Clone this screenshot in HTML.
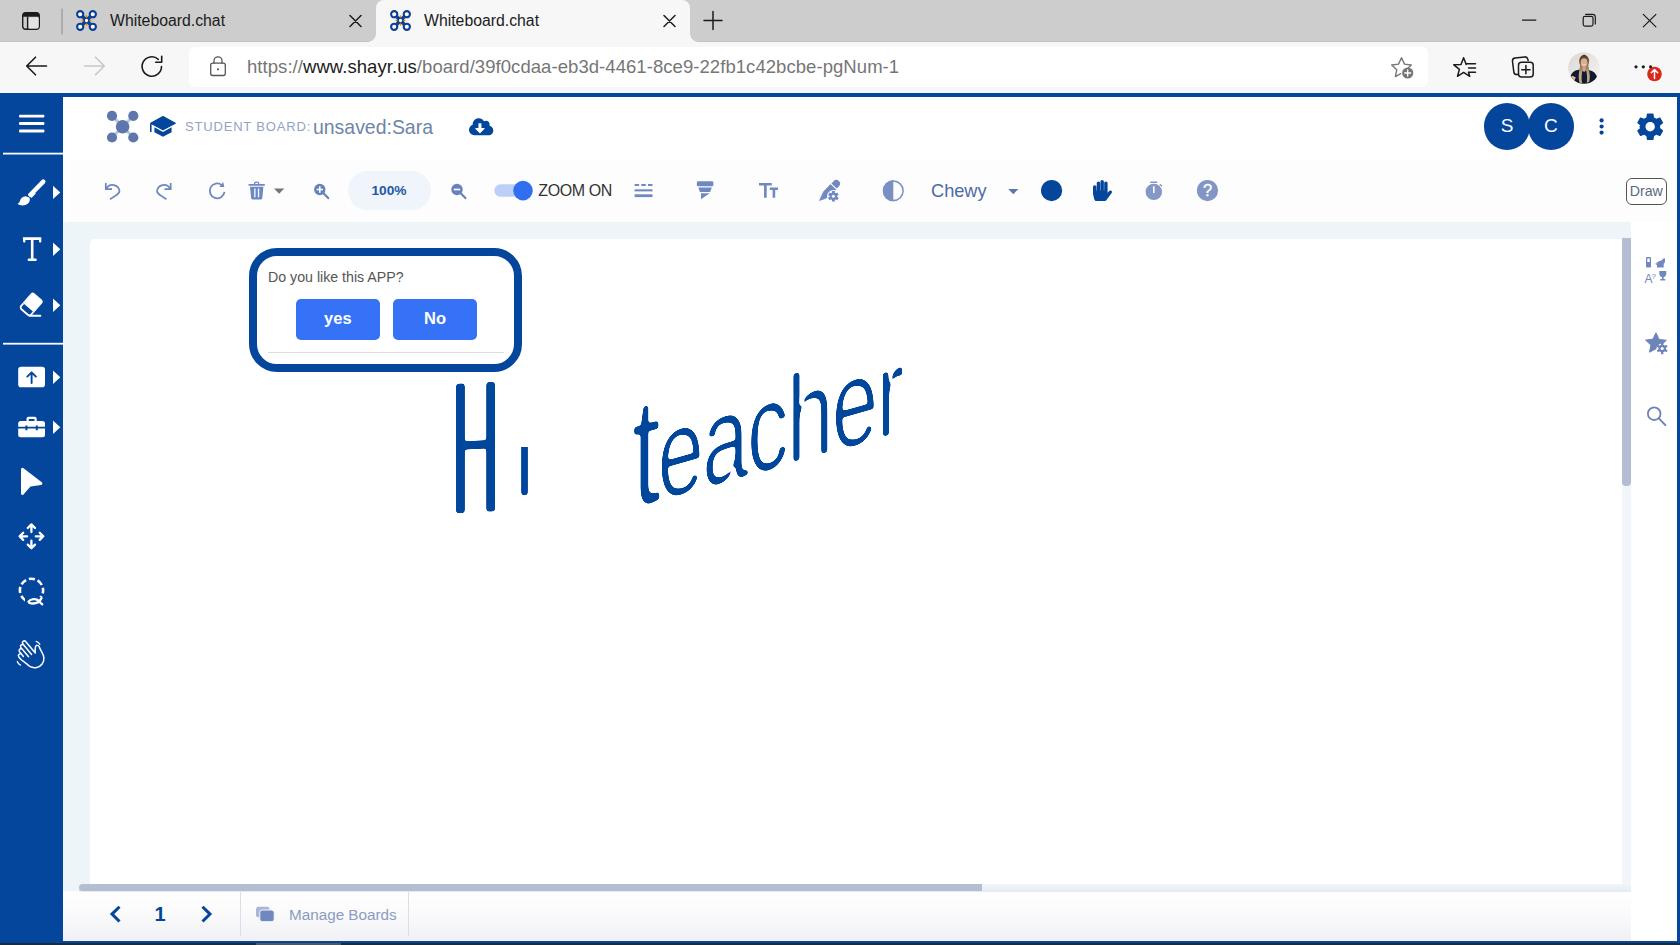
<!DOCTYPE html>
<html lang="en">
<head>
<meta charset="utf-8">
<title>Whiteboard.chat</title>
<style>
*{box-sizing:border-box;margin:0;padding:0}
html,body{width:1680px;height:945px;overflow:hidden;background:#fff}
body{position:relative;font-family:"Liberation Sans",sans-serif;color:#222}
.abs{position:absolute}
svg{position:absolute;overflow:visible}
/* ---------- browser chrome ---------- */
#tabbar{left:0;top:0;width:1680px;height:42px;background:#cccdcc;border-bottom:1px solid #c2c3c2}
#tab2{left:376px;top:0;width:314px;height:42px;background:#f7f7f7;border-radius:8px 8px 0 0}
#tab2:before,#tab2:after{content:"";position:absolute;bottom:0;width:8px;height:8px}
#tab2:before{left:-8px;background:radial-gradient(circle at 0 0,rgba(247,247,247,0) 7.5px,#f7f7f7 8px)}
#tab2:after{right:-8px;background:radial-gradient(circle at 100% 0,rgba(247,247,247,0) 7.5px,#f7f7f7 8px)}
.tabtitle{top:11.3px;font-size:15.8px;color:#1b1b1b;white-space:nowrap;line-height:20px}
#navbar{left:0;top:42px;width:1680px;height:51px;background:#f7f7f7}
#addr{left:189px;top:47px;width:1239px;height:40px;background:#fff;border-radius:6px}
#url{left:247px;top:55px;font-size:18.5px;letter-spacing:.06px;line-height:24px;color:#767676;white-space:nowrap}
#url b{font-weight:normal;color:#1b1b1b}
/* ---------- app frame ---------- */
#frame{left:0;top:93px;width:1680px;height:850px;background:#04469b}
#bottomdark{left:0;top:942.5px;width:1680px;height:2.5px;background:#1a2b3c}
#main{left:63px;top:97px;width:1614px;height:844px;background:#fff}
#workbg{left:63px;top:222px;width:1568px;height:670px;background:#eef5f9}
#canvas{left:89.5px;top:238.5px;width:1541.5px;height:647.5px;background:#fff;border-radius:5px 0 0 0}

/* ---------- app header ---------- */
#tbstrip{left:70px;top:160px;width:1607px;height:62px;background:#fdfdfe}
.lato{font-family:"Liberation Sans",sans-serif}
#sb{left:185px;top:119px;font-size:13px;letter-spacing:.82px;color:#93a3c5;line-height:16px;white-space:nowrap}
#bn{left:313px;top:115px;font-size:19.45px;color:#6d85a8;line-height:24px;white-space:nowrap}
.av{width:46.6px;height:46.6px;border-radius:50%;background:#04469b;color:#fff;font-size:19px;line-height:46.6px;text-align:center;top:103px}
#pill{left:347.5px;top:171px;width:83px;height:39px;border-radius:20px;background:#eff5fb}
#pct{left:347.5px;top:171px;width:83px;text-align:center;font-weight:bold;font-size:13.7px;line-height:39px;color:#1f58a4}
#zoomon{left:538.3px;top:181px;font-size:16px;letter-spacing:-.4px;line-height:20px;color:#333;white-space:nowrap}
#chewy{left:931px;top:179px;font-size:18.2px;line-height:24px;color:#4d6aa6;white-space:nowrap}
#drawbtn{left:1625.8px;top:177.5px;width:41px;height:27.5px;border:1px solid #555;border-radius:6px;font-size:14.2px;line-height:25px;text-align:center;color:#5d6880;background:#fff}

/* ---------- canvas content ---------- */
#dlg{left:249.3px;top:248.4px;width:273.2px;height:123.2px;border:8px solid #04469b;border-radius:28px;background:#fff}
#dlgq{left:268px;top:268px;font-size:14.2px;line-height:18px;color:#555;white-space:nowrap}
.qb{top:299.3px;width:84px;height:40.7px;border-radius:5px;background:#3572f5;color:#fff;font-weight:bold;font-size:16.5px;line-height:39px;text-align:center}
#dlgline{left:267.7px;top:352px;width:236.3px;height:1px;background:#ddd}
.hw{color:#04469b;white-space:nowrap;line-height:1;transform-origin:0 0}
#hwHi{left:452px;top:349px;font-size:116px;transform:skewY(-3deg) scale(.37,1.130)}
#hwHi::first-letter{font-size:176px;letter-spacing:56px;vertical-align:-13px}
#hwT{left:632px;top:378px;font-size:100px;letter-spacing:-2px;transform:skewY(-15.7deg) scale(.835,1.240)}
#hwT::first-letter{font-size:124px;letter-spacing:-4px}

/* ---------- scrollbars / right rail / bottom bar ---------- */
#vtrack{left:1622px;top:238px;width:9px;height:648px;background:#f2f6fa}
#vthumb{left:1622px;top:238px;width:8.5px;height:248px;background:#b4bed2;border-radius:0 0 4px 4px}
#htrack{left:79px;top:884px;width:1552px;height:7.5px;background:linear-gradient(#f2f6fa,#e3eaf1)}
#hthumb{left:79px;top:884px;width:903px;height:7px;background:#b4bed2;border-radius:4px 0 0 4px}
#bbar{left:63px;top:891px;width:1568px;height:50px;background:linear-gradient(#ffffff 0,#fbfbfc 40%,#f1f1f5 100%)}
.bdiv{top:892px;width:1px;height:44px;background:#d9deea}
#pgnum{left:150px;top:902px;width:20px;text-align:center;font-weight:bold;font-size:20px;line-height:24px;color:#04469b}
#mb{left:289px;top:905px;font-size:15.250px;line-height:20px;color:#8a9cc1;white-space:nowrap}
</style>
</head>
<body>
<!-- browser chrome -->
<div id="tabbar" class="abs"></div>
<div id="tab2" class="abs"></div>
<div class="abs tabtitle" style="left:110px">Whiteboard.chat</div>
<div class="abs tabtitle" style="left:424px">Whiteboard.chat</div>
<div id="navbar" class="abs"></div>
<div id="addr" class="abs"></div>
<div id="url" class="abs">https://<b>www.shayr.us</b>/board/39f0cdaa-eb3d-4461-8ce9-22fb1c42bcbe-pgNum-1</div>

<!-- chrome icons -->
<svg style="left:0;top:0" width="1680" height="93" viewBox="0 0 1680 93" fill="none" stroke="#1b1b1b" stroke-width="1.4" stroke-linecap="round" stroke-linejoin="round">
  <!-- tab actions -->
  <rect x="22.7" y="12.7" width="16.6" height="16.6" rx="3.2"/>
  <path d="M22.7 16.8v-1a3.2 3.2 0 0 1 3.2-3.2h10.2a3.2 3.2 0 0 1 3.2 3.2v1z" fill="#1b1b1b" stroke="none"/><rect x="28.3" y="17.5" width="10.3" height="11.1" rx="1.5" fill="#e4e4e4" stroke="none"/>
  <path d="M27.6 17v12"/>
  <path d="M62 9v25" stroke="#8c8c8c" stroke-width="1"/>
  <!-- close x / plus -->
  <path d="M350 15.5l11 11M361 15.5l-11 11M664 15.5l11 11M675 15.5l-11 11" stroke-width="1.5"/>
  <path d="M704 20.5h18M713 11.5v18" stroke-width="1.5"/>
  <!-- window controls -->
  <path d="M1522.5 20.2h13.3" stroke-width="1.2"/>
  <rect x="1583.2" y="16.3" width="9.8" height="9.8" rx="1.8" stroke-width="1.2"/>
  <path d="M1585.6 14.3h6.9a2.8 2.8 0 0 1 2.8 2.8v6.9" stroke-width="1.2"/>
  <path d="M1643.3 14.3l12.6 12.6M1655.9 14.3l-12.6 12.6" stroke-width="1.2"/>
  <!-- back / fwd / reload -->
  <path d="M46.5 66H27M35.5 57.2L26.7 66l8.8 8.8" stroke-width="1.6"/>
  <path d="M84.5 66H104M95.5 57.2l8.8 8.8-8.8 8.8" stroke="#c8c8c8" stroke-width="1.6"/>
  <path d="M161.5 66.5a9.7 9.7 0 1 1-3.2-7.2M161.7 56.3v6h-6" stroke-width="1.6"/>
  <!-- lock -->
  <rect x="210.7" y="63.2" width="14.6" height="12.3" rx="2" stroke="#555" stroke-width="1.3"/>
  <path d="M214 63v-2.2a4 4 0 0 1 8 0V63" stroke="#555" stroke-width="1.3"/>
  <circle cx="218" cy="69.3" r="1.1" fill="#555" stroke="none"/>
  <!-- star plus -->
  <path d="M1401.5 57.8l3 6.3 6.8 0.9-5 4.7 0.6 3M1401.5 57.8l-3 6.3-6.8 0.9 5 4.8-1.3 6.8 5.3-2.9" stroke="#767676" stroke-width="1.4"/>
  <circle cx="1407.7" cy="73" r="5.6" fill="#767676" stroke="none"/>
  <path d="M1404.7 73h6M1407.7 70v6" stroke="#fff" stroke-width="1.3"/>
  <!-- favorites -->
  <path d="M1466.2 64.4 L1463.6 57.7 L1461.0 64.4 L1453.8 64.8 L1459.4 69.4 L1457.5 76.3 L1463.6 72.4 L1469.7 76.3 L1468.6 72.5" stroke-width="1.5"/>
  <path d="M1466.5 63.7h9M1468.5 68h7M1468.5 72.3h7" stroke-width="1.5"/>
  <!-- collections -->
  <path d="M1518 74.5h-1.2a3 3 0 0 1-3-2.7l-1.3-10.5a3 3 0 0 1 2.6-3.3l9.5-1.1a3 3 0 0 1 3.2 2.2l0.3 1.3" stroke-width="1.5"/>
  <rect x="1518.5" y="62.3" width="14.7" height="14.7" rx="3" stroke-width="1.5"/>
  <path d="M1521.8 69.650h8.2M1525.9 65.5v8.3" stroke-width="1.5"/>
  <!-- ellipsis -->
  <g fill="#1b1b1b" stroke="none"><circle cx="1636" cy="66.8" r="1.6"/><circle cx="1643.3" cy="66.8" r="1.6"/><circle cx="1650.6" cy="66.8" r="1.6"/></g>
  <circle cx="1654.5" cy="74" r="7.3" fill="#d9271a" stroke="none"/>
  <path d="M1654.5 78.5v-8.5M1651.3 72.8l3.2-3.2 3.2 3.2" stroke="#fff" stroke-width="1.5"/>
</svg>
<!-- favicons -->
<svg style="left:76px;top:10px" width="21" height="21" viewBox="0 0 21 21"><g fill="#fff" stroke="#0a3f94" stroke-width="2.1">
  <circle cx="4.2" cy="4.2" r="3.1"/><circle cx="16.8" cy="4.2" r="3.1"/><circle cx="4.2" cy="16.8" r="3.1"/><circle cx="16.8" cy="16.8" r="3.1"/>
  <path d="M6.8 6.8l7.4 7.4M14.2 6.8l-7.4 7.4" stroke-width="3.4"/>
  <circle cx="10.5" cy="10.5" r="2.5" stroke-width="1.7"/>
  <g fill="#f08a00" stroke="none"><circle cx="10.5" cy="6.4" r="1.050"/><circle cx="10.5" cy="14.6" r="1.050"/><circle cx="6.4" cy="10.5" r="1.050"/><circle cx="14.6" cy="10.5" r="1.050"/></g>
</g></svg>
<svg style="left:390px;top:10px" width="21" height="21" viewBox="0 0 21 21"><g fill="#fff" stroke="#0a3f94" stroke-width="2.1">
  <circle cx="4.2" cy="4.2" r="3.1"/><circle cx="16.8" cy="4.2" r="3.1"/><circle cx="4.2" cy="16.8" r="3.1"/><circle cx="16.8" cy="16.8" r="3.1"/>
  <path d="M6.8 6.8l7.4 7.4M14.2 6.8l-7.4 7.4" stroke-width="3.4"/>
  <circle cx="10.5" cy="10.5" r="2.5" stroke-width="1.7"/>
  <g fill="#f08a00" stroke="none"><circle cx="10.5" cy="6.4" r="1.050"/><circle cx="10.5" cy="14.6" r="1.050"/><circle cx="6.4" cy="10.5" r="1.050"/><circle cx="14.6" cy="10.5" r="1.050"/></g>
</g></svg>

<!-- profile photo -->
<svg style="left:1567.6px;top:51.6px" width="32" height="32" viewBox="0 0 32 32">
  <defs><clipPath id="pc"><circle cx="16" cy="16" r="15.8"/></clipPath>
  <linearGradient id="pbg" x1="0" y1="0" x2="1" y2="1"><stop offset="0" stop-color="#d9d8d3"/><stop offset=".55" stop-color="#e9e8e5"/><stop offset="1" stop-color="#f6f5f3"/></linearGradient>
  <linearGradient id="hair2" x1="0" y1="0" x2="0" y2="1"><stop offset="0" stop-color="#4a3828"/><stop offset="1" stop-color="#9a7f5c"/></linearGradient><linearGradient id="hair" x1="0" y1="0" x2="0" y2="1"><stop offset="0" stop-color="#4a3828"/><stop offset=".35" stop-color="#8a6f4e"/><stop offset=".7" stop-color="#c4ab82"/><stop offset="1" stop-color="#bfa77c"/></linearGradient></defs>
  <g clip-path="url(#pc)">
    <rect width="32" height="32" fill="url(#pbg)"/>
    <path d="M2.5 24.5c1-3.5 3.5-6 8-6.7l5.5-0.8 5.5 1.3c4.5 1 6.5 3.5 7.5 6.7l-3 4.5c-3 2.5-7 3.7-10 3.7s-8-1.7-11-5z" fill="#101832"/>
    <path d="M2 25.5l2.5-1.7 3.3 1.6-1.5 3.4z" fill="#e0b79b"/>
    <path d="M11.3 30.5c-1.2-6.5-0.3-11.5 0.7-16.5 0.5-4.5 0.8-7.5 1.8-9.5 0.7-1.3 1.6-1.8 2.3-1.8 1 0 1.9 0.5 2.5 1.8 1 2 1.2 5 1.8 9.5 0.8 5 2 10 1 15.5l-2.6 1.5c0.7-5.5 0.2-9.5-0.8-12.5h-3.4c-1 3-1.4 7.5-0.5 13z" fill="url(#hair)"/>
    <ellipse cx="16.1" cy="9.3" rx="5" ry="6.4" fill="url(#hair2)"/><ellipse cx="16.1" cy="10.7" rx="3.3" ry="4.4" fill="#dcad8f"/>
    <path d="M14.6 14h3v4.5l-1.5 1.7-1.5-1.7z" fill="#d3a184"/>
    <path d="M14.7 12.3c0.9 0.8 2 0.8 2.9 0" stroke="#fff" stroke-width="0.7" fill="none"/>
  </g>
</svg>
<!-- app -->
<div id="frame" class="abs"></div>
<div id="bottomdark" class="abs"></div><div class="abs" style="left:256px;top:942.5px;width:85px;height:2.5px;background:#4d5760"></div>
<div id="main" class="abs"></div>
<div id="workbg" class="abs"></div>
<div id="canvas" class="abs"></div>


<!-- header -->
<div id="tbstrip" class="abs"></div>
<svg style="left:63px;top:97px" width="1614" height="125" viewBox="63 97 1614 125" fill="none">
  <!-- logo -->
  <g stroke="#b9c4de" stroke-width="3.2"><path d="M112 115.8l21.3 21.7M133.3 115.8L112 137.5"/></g>
  <g fill="#5d76ab"><circle cx="112" cy="115.8" r="5.1"/><circle cx="133.3" cy="115.8" r="5.1"/><circle cx="112" cy="137.5" r="5.1"/><circle cx="133.3" cy="137.5" r="5.1"/><circle cx="122.6" cy="126.7" r="6.8"/></g>
  <!-- grad cap -->
  <g fill="#04469b">
    <path d="M163 116.6l12.3 6.6-12.3 6.6-12.3-6.6z" stroke="#04469b" stroke-width="1.2" stroke-linejoin="round"/>
    <path d="M154.4 127.3v5l8.6 4.4 8.6-4.4v-5l-8.6 4.6z"/>
    <path d="M150.8 124v7.5" stroke="#04469b" stroke-width="1.6" stroke-linecap="round"/>
  </g>
  <!-- cloud download -->
  <g transform="translate(469 117.1) scale(0.038)"><path fill="#04469b" d="M537.6 226.6c4.1-10.7 6.4-22.4 6.4-34.6 0-53-43-96-96-96-19.7 0-38.1 6-53.3 16.2C367 64.2 315.3 32 256 32c-88.4 0-160 71.6-160 160 0 2.7.1 5.4.2 8.1C40.2 219.8 0 273.2 0 336c0 79.5 64.5 144 144 144h368c70.7 0 128-57.3 128-128 0-61.9-44-113.6-102.4-125.4zm-132.9 88.7L299.3 420.7c-6.2 6.2-16.4 6.2-22.6 0L171.3 315.3c-10.1-10.1-2.9-27.3 11.3-27.3H248V176c0-8.8 7.2-16 16-16h48c8.8 0 16 7.2 16 16v112h65.4c14.2 0 21.4 17.2 11.3 27.3z"/></g>
  <!-- more / gear -->
  <g fill="#04469b"><circle cx="1601.6" cy="120.4" r="2.1"/><circle cx="1601.6" cy="126.5" r="2.1"/><circle cx="1601.6" cy="132.6" r="2.1"/></g>
  <g transform="translate(1634.2 110.750) scale(1.333)" fill="#04469b"><path d="M19.430 12.980c.04-.32.070-.64.070-.98s-.03-.66-.07-.98l2.110-1.650c.19-.15.240-.42.120-.64l-2-3.460c-.12-.22-.39-.3-.61-.22l-2.490 1c-.52-.4-1.080-.73-1.690-.98l-.38-2.650C14.460 2.180 14.250 2 14 2h-4c-.25 0-.46.180-.49.420l-.38 2.650c-.61.250-1.170.59-1.690.98l-2.490-1c-.23-.09-.49 0-.61.220l-2 3.460c-.13.220-.07.490.12.640l2.110 1.650c-.4.320-.7.650-.7.980s.3.660.7.980l-2.110 1.650c-.19.150-.24.420-.12.640l2 3.460c.12.220.39.3.61.220l2.490-1c.52.4 1.080.73 1.690.98l.38 2.650c.3.240.24.420.49.420h4c.25 0 .46-.18.490-.42l.38-2.650c.61-.25 1.170-.59 1.690-.98l2.490 1c.23.090.49 0 .61-.22l2-3.460c.12-.22.070-.49-.12-.64l-2.110-1.650zM12 15.5c-1.930 0-3.5-1.570-3.5-3.5s1.570-3.5 3.5-3.5 3.5 1.570 3.5 3.5-1.570 3.5-3.5 3.5z"/></g>
  <!-- ===== toolbar icons ===== -->
  <g stroke="#6f87bd" stroke-width="1.7" stroke-linecap="square" stroke-linejoin="miter">
    <!-- undo -->
    <path d="M105.8 183v6.2h6.2M106.5 188.5a7 7 0 0 1 13 2.6c0 2.1-1.5 3.5-9.5 8.2" stroke-linecap="butt"/>
    <!-- redo -->
    <path d="M170.7 183v6.2h-6.2M170 188.5a7 7 0 0 0-13 2.6c0 2.1 1.5 3.5 9.5 8.2" stroke-linecap="butt"/>
    <!-- refresh -->
    <path d="M224.5 191.9A7.4 7.4 0 1 1 221.8 185.1" stroke-linecap="butt" stroke-width="1.8"/>
    <path d="M224.3 187.0L223.2 182.0L219.3 186.9z" fill="#6f87bd" stroke="none"/>
  </g>
  <!-- trash -->
  <g fill="#6d88c4">
    <path d="M254 184v-0.6a2 2 0 0 1 2-2h1.4a2 2 0 0 1 2 2v0.6h-1.3v-0.4a0.9 0.9 0 0 0-0.9-0.9h-1a0.9 0.9 0 0 0-0.9 0.9v0.4z"/>
    <rect x="248.4" y="184" width="16.6" height="1.7" rx="0.8"/>
    <path d="M250 186.8h13.4l-1.1 11.1a1.9 1.9 0 0 1-1.9 1.7h-7.4a1.9 1.9 0 0 1-1.9-1.7zM254.2 188.6v8.6h1.3v-8.6zM257.9 188.6v8.6h1.3v-8.6z" fill-rule="evenodd"/>
  </g>
  <path d="M274 188.4h10.3l-5.150 5.4z" fill="#757575"/>
  <!-- zoom in -->
  <circle cx="319.8" cy="189.5" r="5.7" fill="#6682bd"/>
  <path d="M323.5 193.2l4.7 4.9" stroke="#6682bd" stroke-width="2.2" stroke-linecap="round"/>
  <path d="M316.6 189.5h6.4M319.8 186.3v6.4" stroke="#fff" stroke-width="1.6"/>
  <!-- zoom out -->
  <circle cx="457" cy="189.5" r="5.7" fill="#6682bd"/>
  <path d="M460.7 193.2l4.7 4.9" stroke="#6682bd" stroke-width="2.2" stroke-linecap="round"/>
  <path d="M453.8 189.5h6.4" stroke="#fff" stroke-width="1.6"/>
  <!-- toggle -->
  <rect x="494.3" y="184.3" width="34" height="12.5" rx="6.250" fill="#bccff8"/>
  <circle cx="523" cy="190.6" r="9.8" fill="#2f6ff0"/>
  <!-- line style -->
  <g fill="#7189c1"><rect x="634.6" y="184" width="4.5" height="2"/><rect x="641.3" y="184" width="4.5" height="2"/><rect x="648" y="184" width="4.5" height="2"/><rect x="634.6" y="189.3" width="17.9" height="2.1"/><rect x="634.6" y="194.3" width="17.9" height="2.8"/></g>
  <!-- brush-stroke icon -->
  <g fill="#7189c1"><path d="M698.2 181.3h13.8a1.4 1.4 0 0 1 1.4 1.4v2.2a1.4 1.4 0 0 1-1.4 1.4h-13.8a1.4 1.4 0 0 1-1.4-1.4v-2.2a1.4 1.4 0 0 1 1.4-1.4z"/><path d="M698.3 187.6h13.5l-1.6 4.4h-10.3z"/><path d="M701 193.3h8.7l-8.7 6z"/></g>
  <!-- Tt -->
  <path d="M759 183h12.8v2.6h-5.1v12.1h-2.7v-12.1h-5zM769.8 187.4h8.2v2.5h-2.8v7.8h-2.6v-7.8h-2.8z" fill="#7189c1"/>
  <!-- pen gear -->
  <g fill="#7189c1">
    <path d="M831.4 183.5 L833.6 181.2 A3.7 3.7 0 0 1 839.0 186.3 L836.8 188.6 Z"/>
    <path d="M830.5 184.5 L835.8 189.6 L830.7 195.0 Q826.3 199.0 819.6 200.4 L823.6 191.7 Z" stroke="#7189c1" stroke-width="0.8" stroke-linejoin="round"/>
  </g>
  <circle cx="833.4" cy="196.3" r="6.3" fill="#fdfdfe"/>
  <g fill="#7189c1"><circle cx="833.4" cy="196.3" r="3.7"/>
    <path d="M833.4 191v10.6M828.8 193.650l9.2 5.3M828.8 198.950l9.2-5.3" stroke="#7189c1" stroke-width="2.9"/>
  </g>
  <circle cx="833.4" cy="196.3" r="1.5" fill="#fff"/>
  <!-- contrast -->
  <circle cx="893.3" cy="190.8" r="9.8" stroke="#7a90c4" stroke-width="1.5"/>
  <path d="M893.3 180.3a10.5 10.5 0 0 0 0 21z" fill="#7a90c4"/>
  <!-- caret -->
  <path d="M1008.3 189h10l-5 5.2z" fill="#5c77ad"/>
  <!-- colour dot -->
  <circle cx="1051.6" cy="190.6" r="10.6" fill="#04469b"/>
  <!-- hand (FA hand-paper) -->
  <g transform="translate(1112 179.9) scale(-0.0424 0.0413)" fill="#04469b"><path d="M408.781 128.007C386.356 127.578 368 146.360 368 168.790V256h-8V79.790c0-22.430-18.356-41.212-40.781-40.783C297.488 39.423 280 57.169 280 79v177h-8V40.790C272 18.360 253.644-.422 231.219.007 209.488.423 192 18.169 192 40v216h-8V80.790c0-22.430-18.356-41.212-40.781-40.783C121.488 40.423 104 58.169 104 80v235.992l-31.648-43.519c-12.993-17.866-38.009-21.817-55.877-8.823-17.865 12.994-21.815 38.010-8.822 55.877l125.601 172.705A48 48 0 0 0 172.073 512h197.590c22.274 0 41.622-15.324 46.724-37.006l26.508-112.660a192.011 192.011 0 0 0 5.104-43.975V168c.001-21.831-17.487-39.577-39.218-39.993z"/></g>
  <!-- stopwatch -->
  <g fill="#8597c4"><circle cx="1153.8" cy="191.9" r="8.2"/><rect x="1150.2" y="181.5" width="7.2" height="1.6" rx="0.5"/><path d="M1159.8 184.2l2.2 2" stroke="#8597c4" stroke-width="1.5"/></g>
  <path d="M1153.8 186.8v5.6" stroke="#fff" stroke-width="1.6" stroke-linecap="round"/>
  <!-- help -->
  <circle cx="1207.5" cy="190.6" r="10.6" fill="#8295c4"/>
</svg>
<div id="sb" class="abs lato">STUDENT BOARD:</div>
<div id="bn" class="abs lato">unsaved:Sara</div>
<div class="abs av" style="left:1527.7px">C</div>
<div class="abs av" style="left:1483.7px">S</div>
<div id="pill" class="abs"></div>
<div id="pct" class="abs">100%</div>
<div id="zoomon" class="abs">ZOOM ON</div>
<div id="chewy" class="abs">Chewy</div>
<div class="abs" style="left:1197px;top:180px;width:21px;text-align:center;font-size:16.5px;line-height:21px;color:#fff;-webkit-text-stroke:.35px #fff">?</div>
<div id="drawbtn" class="abs">Draw</div>

<!-- canvas content -->
<div id="dlg" class="abs"></div>
<div id="dlgq" class="abs">Do you like this APP?</div>
<div class="abs qb" style="left:295.8px">yes</div>
<div class="abs qb" style="left:393px">No</div>
<div id="dlgline" class="abs"></div>
<svg width="0" height="0"><defs>
  <filter id="hwf1" x="-20%" y="-20%" width="140%" height="140%"><feMorphology operator="erode" radius="0 4.2"/><feMorphology operator="dilate" radius="0.8 0"/><feGaussianBlur stdDeviation="1.4"/><feComponentTransfer><feFuncA type="linear" slope="7" intercept="-2.4"/></feComponentTransfer></filter>
  <filter id="hwf2" x="-20%" y="-60%" width="140%" height="220%"><feMorphology operator="erode" radius="0.5 1.1"/><feGaussianBlur stdDeviation="1.4"/><feComponentTransfer><feFuncA type="linear" slope="7" intercept="-2.4"/></feComponentTransfer></filter>
</defs></svg>
<div class="abs" style="left:0;top:0;width:1680px;height:945px;filter:url(#hwf1);clip-path:polygon(0 0,510px 0,510px 447px,1680px 447px,1680px 945px,0 945px)"><div id="hwHi" class="abs hw">Hi</div></div>
<div class="abs" style="left:0;top:0;width:1680px;height:945px;filter:url(#hwf2)"><div id="hwT" class="abs hw">teacher</div></div>

<!-- scrollbars, right rail, bottom bar -->
<div id="vtrack" class="abs"></div><div id="vthumb" class="abs"></div>
<div id="bbar" class="abs"></div>
<div id="htrack" class="abs"></div><div id="hthumb" class="abs"></div>
<div class="abs bdiv" style="left:240px"></div><div class="abs bdiv" style="left:408px"></div>
<svg style="left:63px;top:230px" width="1614" height="711" viewBox="63 230 1614 711" fill="none">
  <!-- right rail: 4-in-1 icon -->
  <g fill="#7088bf">
    <rect x="1646" y="257" width="5" height="10.5" rx="1"/>
    <path d="M1657 267.5v-3.5c0-1.5 1-2.5 2.5-3l3-1v-2l1.2 1 1.3-1v3.5c0 1-0.5 1.7-1.3 2v4z"/>
    <path d="M1659.3 271h7v2.5c0 2-1.3 3.5-2.7 3.8v1.7h1.7v1.5h-5v-1.5h1.7v-1.7c-1.4-0.3-2.7-1.8-2.7-3.8z"/>
  </g>
  <path d="M1657.5 262.5c-1.5 0-1.8 1.8-0.7 2.5" stroke="#7088bf" stroke-width="1"/>
  <rect x="1647.3" y="258.5" width="2.4" height="3.5" fill="#fff"/>
  <!-- star gear -->
  <path d="M1656 332.8l3.1 6.6 7.2 0.9-3.3 3.1c-3.4-0.6-6.6 1.8-6.9 5.3l-6.6 3.5 1.4-7.1-5.3-5 7.2-0.9z" fill="#6d84b8" stroke="#6d84b8" stroke-width="1" stroke-linejoin="round"/>
  <g stroke="#6d84b8" stroke-width="2.3"><path d="M1662.2 342.8v11.4M1657.3 345.650l9.8 5.7M1657.3 351.350l9.8-5.7"/></g>
  <circle cx="1662.2" cy="348.5" r="3.7" fill="#6d84b8"/><circle cx="1662.2" cy="348.5" r="1.5" fill="#fff"/>
  <!-- search -->
  <circle cx="1654.2" cy="413.7" r="6.3" stroke="#6d84b8" stroke-width="1.8"/>
  <path d="M1658.8 418.4l6.6 6.7" stroke="#6d84b8" stroke-width="2" stroke-linecap="round"/>
  <!-- pager -->
  <path d="M119.5 906.7l-7.5 7.4 7.5 7.4M202.5 906.7l7.5 7.4-7.5 7.4" stroke="#04469b" stroke-width="3" stroke-linejoin="miter"/>
  <!-- boards icon -->
  <rect x="256" y="906.7" width="13.5" height="10.5" rx="2.5" fill="#a9b6d6"/>
  <rect x="259.8" y="910" width="14.4" height="11.7" rx="2.5" fill="#7088bf" stroke="#f8f8fa" stroke-width="1"/>
</svg>
<div class="abs" style="left:1644.5px;top:269.5px;font-size:12px;line-height:13px;color:#7088bf;letter-spacing:-1px;white-space:nowrap">A<span style="font-size:8px;vertical-align:4px">?</span></div>
<div id="pgnum" class="abs">1</div>
<div id="mb" class="abs lato">Manage Boards</div>
<!-- sidebar -->
<svg style="left:0;top:93px" width="63" height="600" viewBox="0 93 63 600" fill="#fff" stroke="none">
  <!-- hamburger -->
  <rect x="19" y="114.7" width="25.4" height="2.8" rx="1"/><rect x="19" y="122.1" width="25.4" height="2.8" rx="1"/><rect x="19" y="129.6" width="25.4" height="2.8" rx="1"/>
  <rect x="3" y="152.7" width="60" height="1.8"/>
  <rect x="3" y="342.8" width="60" height="1.8"/>
  <!-- fly-out arrows -->
  <path d="M53 185.7l7.3 6.7-7.3 6.7zM53 242.5l7.3 6.7-7.3 6.7zM53 298.5l7.3 6.7-7.3 6.7zM53 370.5l7.3 6.7-7.3 6.7zM53 420.5l7.3 6.7-7.3 6.7z"/>
  <!-- brush -->
  <path d="M43.3 181.6L30.4 194.8" fill="none" stroke="#fff" stroke-width="4.4" stroke-linecap="round"/>
  <path d="M32.8 190.5l3 3-4.3 4.5-3.6-3.4z"/>
  <path d="M25.6 196.3c-3.2 0.2-4.9 2.1-5.5 4.3-0.4 1.5-1.2 2.7-2.6 3.4 2.4 1.7 7.6 2.2 10.5-0.5 1.9-1.8 2.4-4.2 1.3-6.1z"/>
  <!-- T -->
  <path d="M22.9 237.2h18.4v4.4a0.9 0.9 0 0 1-0.9 0.9h-0.5a0.9 0.9 0 0 1-0.9-0.9v-1.7h-5.5v18.5h2.3a0.9 0.9 0 0 1 0.9 0.9v0.8a0.9 0.9 0 0 1-0.9 0.9h-7.2a0.9 0.9 0 0 1-0.9-0.9v-0.8a0.9 0.9 0 0 1 0.9-0.9h2.3v-18.5h-5.5v1.7a0.9 0.9 0 0 1-0.9 0.9h-0.5a0.9 0.9 0 0 1-0.9-0.9z"/>
  <!-- eraser -->
  <g transform="translate(31.4 304.2) rotate(-49)">
    <path d="M-4.6 -7.5h12.4a2.5 2.5 0 0 1 2.5 2.5v10a2.5 2.5 0 0 1-2.5 2.5h-12.4z"/>
    <path d="M-4.6 -6.6h-3.3a2.4 2.4 0 0 0-2.4 2.4v8.4a2.4 2.4 0 0 0 2.4 2.4h3.3" fill="none" stroke="#fff" stroke-width="1.8"/>
  </g>
  <rect x="28.5" y="314.8" width="12.8" height="2" rx="1"/>
  <!-- upload -->
  <rect x="18.2" y="366.8" width="26.8" height="20.4" rx="2.8"/>
  <path d="M31.6 383v-10.5M27.3 376.6l4.3-4.3 4.3 4.3" fill="none" stroke="#04469b" stroke-width="1.9" stroke-linecap="round" stroke-linejoin="round"/>
  <!-- toolbox -->
  <path d="M26.5 421v-2.2a2 2 0 0 1 2-2h6.2a2 2 0 0 1 2 2v2.2h-2.2v-2h-5.8v2z"/>
  <path d="M20.7 421h21.8a2.5 2.5 0 0 1 2.5 2.5v3.3h-7.2v-1.3h-2v1.3h-8.4v-1.3h-2v1.3h-7.2v-3.3a2.5 2.5 0 0 1 2.5-2.5zM18.2 428.6h7.2v1.6h2v-1.6h8.4v1.6h2v-1.6h7.2v6.2a2.5 2.5 0 0 1-2.5 2.5h-21.8a2.5 2.5 0 0 1-2.5-2.5z"/>
  <!-- pointer -->
  <path d="M21 469.3a1.5 1.5 0 0 1 2.5-1.1l18.3 14a1.5 1.5 0 0 1-0.7 2.7l-10.6 1.7-6.6 7.4a1.5 1.5 0 0 1-2.9-0.7z"/>
  <!-- move -->
  <g fill="none" stroke="#fff" stroke-width="2.3" stroke-linecap="round" stroke-linejoin="round">
    <path d="M31.4 524.5v7.5M27.8 528l3.6-3.6 3.6 3.6M31.4 548.2v-7.5M27.8 544.6l3.6 3.6 3.6-3.6M19.6 536.3h7.5M23.2 532.7l-3.6 3.6 3.6 3.6M43.3 536.3h-7.5M39.7 532.7l3.6 3.6-3.6 3.6"/>
  </g>
  <!-- lasso -->
  <circle cx="31.5" cy="590.3" r="11.6" fill="none" stroke="#fff" stroke-width="2.6" stroke-dasharray="6.2 2.9" stroke-dashoffset="3"/>
  <rect x="25" y="597" width="18" height="9" fill="#04469b"/>
  <path d="M28.5 601.6c2-3 8-3.5 10.5-0.5 1 1.3 2 2.5 3.2 3.2M41.5 598c-1.5 3.5-5 5.5-8.5 5.5-2.5 0-4.3-0.8-4.5-1.9" fill="none" stroke="#fff" stroke-width="2.3" stroke-linecap="round"/>
  <!-- waving hand -->
  <g fill="none" stroke="#fff" stroke-width="1.5" stroke-linecap="round" stroke-linejoin="round">
    <path d="M21 659.5l-2.3-2.8a1.9 1.9 0 0 1 2.9-2.4l1.8 2.1M23.4 656.4l-4-4.8a1.9 1.9 0 0 1 2.9-2.4l6.3 7.5M22.3 649.2l-1.5-1.8a1.9 1.9 0 0 1 2.9-2.4l7.9 9.4M23.7 645l-1-1.2a1.9 1.9 0 0 1 2.9-2.4l9.7 11.6M35.3 653c-0.3-2.5-0.5-4.5 0.3-6.5 0.7-1.7 3-1.4 3.6 0.3 1.2 3.8 4.3 6.7 4.7 11 0.4 4.6-2.7 8.7-7.2 9.6-4 0.8-7.6-0.7-10-3.6l-5.7-4.3"/>
    <path d="M36.2 641.3c1.6 0.4 2.9 1.5 3.6 3M17.3 661.5c0.5 1.6 1.7 2.9 3.2 3.6" stroke-width="1.3"/>
  </g>
</svg>
</body>
</html>
